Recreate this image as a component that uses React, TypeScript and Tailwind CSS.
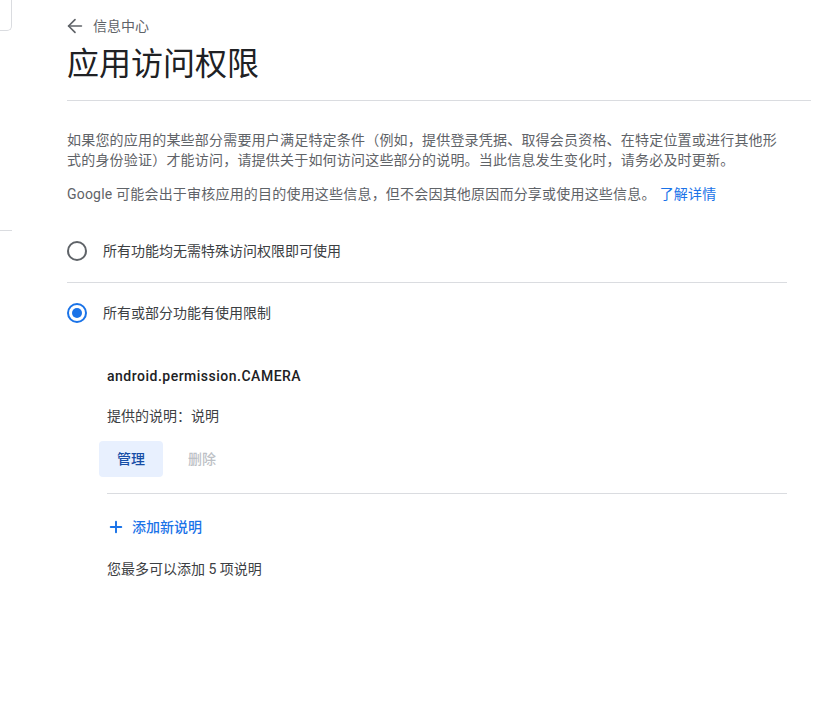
import { ArrowLeft, Plus } from "lucide-react";

const font = "font-['Roboto','Noto_Sans_CJK_SC',sans-serif]";

const Radio = ({ checked }: { checked?: boolean }) => (
	<span
		className={`flex h-[20px] w-[20px] shrink-0 items-center justify-center rounded-full border-2 ${
			checked ? "border-[#1a73e8]" : "border-[#5f6368]"
		}`}
	>
		{checked && <span className="h-[10px] w-[10px] rounded-full bg-[#1a73e8]" />}
	</span>
);

const App = () => {
	return (
		<div className={`flex min-h-[705px] bg-white ${font}`}>
			{/* leftover edge of the side panel */}
			<div className="flex w-[12px] shrink-0 flex-col">
				<div className="h-[31px] rounded-br-[5px] border-r border-b border-[#dadce0]" />
				<div className="mt-[199px] border-t border-[#dadce0]" />
			</div>

			<div className="ml-[55px] w-[744px]">
				<div className="mt-[16px] flex h-[20px] items-center gap-[7px] text-[14px] leading-[20px] text-[#5f6368]">
					<ArrowLeft size={22} strokeWidth={1.8} className="-ml-[3px]" />
					<span>信息中心</span>
				</div>
				<h1 className="mt-[8px] text-[32px] leading-[40px] font-normal text-[#202124]">应用访问权限</h1>
				<div className="mt-[16px] border-t border-[#dadce0]" />

				<div className="w-[720px]">
					<p className="mt-[29px] text-[14px] leading-[20px] tracking-[0.2px] text-[#5f6368]">
						如果您的应用的某些部分需要用户满足特定条件（例如，提供登录凭据、取得会员资格、在特定位置或进行其他形式的身份验证）才能访问，请提供关于如何访问这些部分的说明。当此信息发生变化时，请务必及时更新。
					</p>
					<p className="mt-[14px] text-[14px] leading-[20px] tracking-[0.2px] text-[#5f6368]">
						Google 可能会出于审核应用的目的使用这些信息，但不会因其他原因而分享或使用这些信息。
						<a className="ml-[4px] text-[#1a73e8]">了解详情</a>
					</p>

					<div className="mt-[16px] flex h-[63px] items-center gap-[16px] border-b border-[#dadce0] text-[14px] text-[#3c4043]">
						<Radio />
						<span>所有功能均无需特殊访问权限即可使用</span>
					</div>
					<div className="flex h-[60px] items-center gap-[16px] text-[14px] text-[#3c4043]">
						<Radio checked />
						<span>所有或部分功能有使用限制</span>
					</div>

					<div className="ml-[32px] pt-[23px]">
						<div className="pl-[8px] text-[14px] leading-[20px] font-medium tracking-[0.5px] text-[#202124]">
							android.permission.CAMERA
						</div>
						<div className="mt-[20px] pl-[8px] text-[14px] leading-[20px] text-[#3c4043]">提供的说明：说明</div>
						<div className="mt-[15px] flex gap-[7px]">
							<button className="h-[36px] rounded-[4px] bg-[#e8f0fe] px-[18px] text-[14px] font-medium text-[#174ea6]">
								管理
							</button>
							<button className="h-[36px] rounded-[4px] px-[18px] text-[14px] font-medium text-[#bdc1c6]">删除</button>
						</div>
						<div className="mt-[16px] ml-[8px] border-t border-[#dadce0]" />
						<div className="mt-[23px] flex items-center gap-[7px] pl-[8px] text-[14px] leading-[20px] font-medium text-[#1a73e8]">
							<Plus size={18} strokeWidth={2.6} />
							<span>添加新说明</span>
						</div>
						<div className="mt-[22px] pl-[8px] text-[14px] leading-[20px] text-[#3c4043]">您最多可以添加 5 项说明</div>
					</div>
				</div>
			</div>
		</div>
	);
};

export default App;
